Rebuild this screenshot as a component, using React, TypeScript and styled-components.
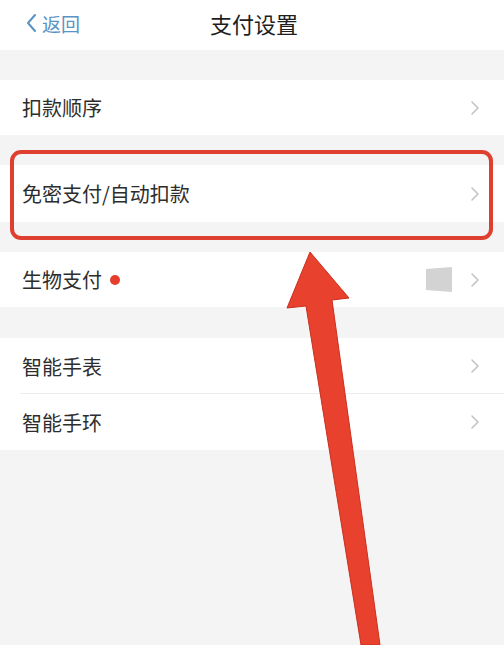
import React from "react";
import styled, { createGlobalStyle } from "styled-components";

const Global = createGlobalStyle`
  html, body {
    margin: 0;
    padding: 0;
    background: #f4f4f5;
    font-family: "Noto Sans CJK SC", "Noto Sans", sans-serif;
  }
`;

const Page = styled.div`
  position: relative;
  width: 504px;
  height: 645px;
  overflow: hidden;
  background: #f4f4f5;
`;

const NavBar = styled.div`
  height: 50px;
  box-sizing: border-box;
  background: #fff;
  display: grid;
  grid-template-columns: 1fr auto 1fr;
  align-items: center;
  padding: 0 24px 4px 26px;
`;

const Back = styled.div`
  display: flex;
  align-items: center;
  gap: 5px;
  color: #5a93c4;
  font-size: 19px;
`;

const Title = styled.div`
  font-size: 22px;
  color: #1e1e1e;
  transform: translateX(1px);
`;

const Gap = styled.div<{ $h: number }>`
  height: ${(p) => p.$h}px;
`;

const Group = styled.div`
  background: #fff;
`;

const Row = styled.div<{ $h: number; $divider?: boolean }>`
  height: ${(p) => p.$h}px;
  display: flex;
  align-items: center;
  padding: 0 24px 0 22px;
  position: relative;
  ${(p) =>
    p.$divider &&
    `&::after {
      content: "";
      position: absolute;
      left: 20px;
      right: 0;
      bottom: 0;
      height: 1px;
      background: #ececec;
    }`}
`;

const Label = styled.div`
  flex: 1;
  display: flex;
  align-items: center;
  gap: 8px;
  font-size: 20px;
  color: #2d2d2d;
`;

const Dot = styled.span`
  width: 10px;
  height: 10px;
  border-radius: 50%;
  background: #e53e2c;
`;

const Thumb = styled.div`
  width: 26px;
  height: 25px;
  margin-right: 18px;
  background: #d3d3d3;
  clip-path: polygon(0 8%, 100% 0, 100% 100%, 0 92%);
`;

const Highlight = styled.div`
  position: absolute;
  left: 10px;
  top: 150px;
  width: 483px;
  height: 90px;
  box-sizing: border-box;
  border: 4px solid #df3f2f;
  border-radius: 11px;
  pointer-events: none;
`;

const ArrowLayer = styled.svg`
  position: absolute;
  left: 0;
  top: 0;
  pointer-events: none;
`;

const Chevron = () => (
  <svg width="10" height="16" viewBox="0 0 10 16">
    <path d="M2 2 L8 8 L2 14" fill="none" stroke="#c4c4c8" strokeWidth="1.6" strokeLinecap="round" strokeLinejoin="round" />
  </svg>
);

const BackChevron = () => (
  <svg width="11" height="20" viewBox="0 0 11 20">
    <path d="M9 2 L2 10 L9 18" fill="none" stroke="#5a93c4" strokeWidth="2" strokeLinecap="round" strokeLinejoin="round" />
  </svg>
);

export default function App() {
  return (
    <Page>
      <Global />
      <NavBar>
        <Back>
          <BackChevron />
          <span>返回</span>
        </Back>
        <Title>支付设置</Title>
        <div />
      </NavBar>
      <Gap $h={30} />
      <Group>
        <Row $h={55}>
          <Label>扣款顺序</Label>
          <Chevron />
        </Row>
      </Group>
      <Gap $h={30} />
      <Group>
        <Row $h={57}>
          <Label>免密支付/自动扣款</Label>
          <Chevron />
        </Row>
      </Group>
      <Gap $h={30} />
      <Group>
        <Row $h={55}>
          <Label>
            生物支付
            <Dot />
          </Label>
          <Thumb />
          <Chevron />
        </Row>
      </Group>
      <Gap $h={31} />
      <Group>
        <Row $h={56} $divider>
          <Label>智能手表</Label>
          <Chevron />
        </Row>
        <Row $h={56}>
          <Label>智能手环</Label>
          <Chevron />
        </Row>
      </Group>

      <Highlight />
      <ArrowLayer width="504" height="645" viewBox="0 0 504 645">
        <polygon
          points="310,252 349,298 332,300 380,645 361,645 306,306 287,308"
          fill="#e8412e"
          stroke="#c9301f"
          strokeWidth="1"
          strokeLinejoin="round"
        />
      </ArrowLayer>
    </Page>
  );
}
